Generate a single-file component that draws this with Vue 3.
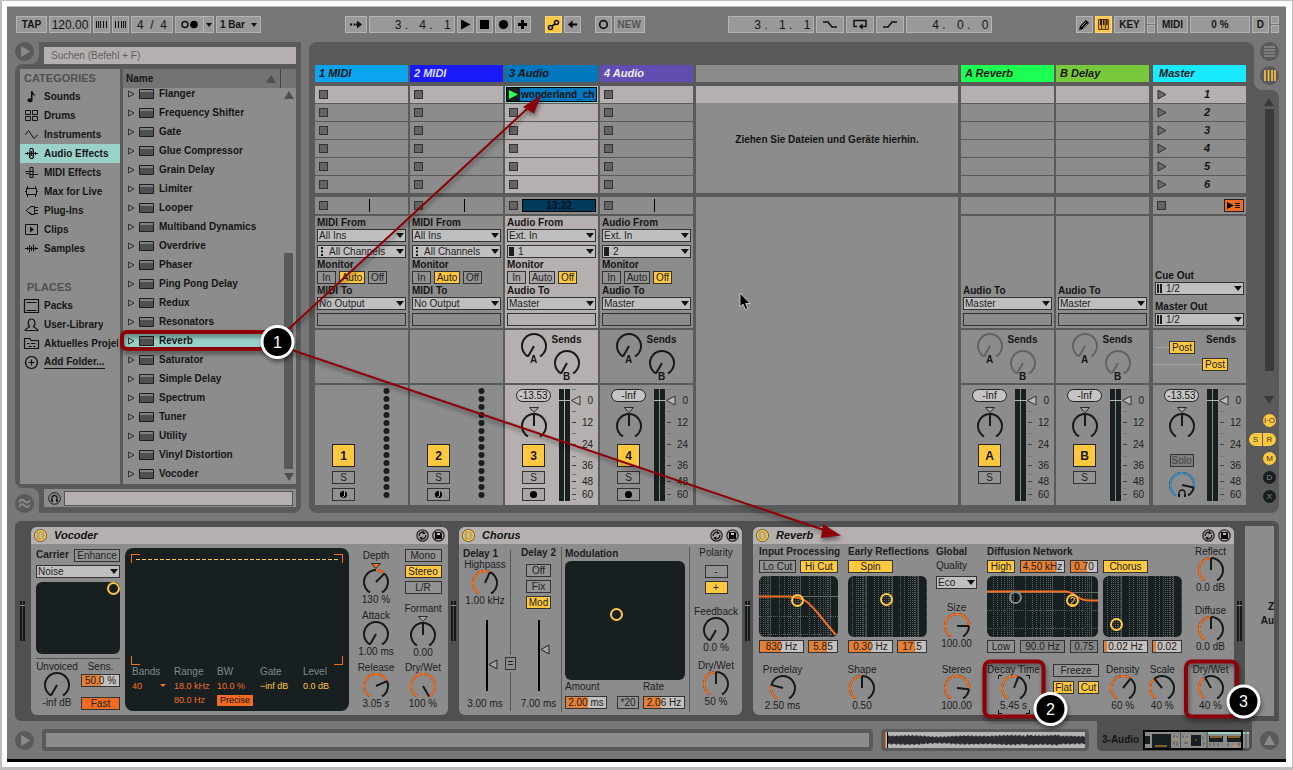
<script setup>
import { h } from 'vue'

const point = (deg, r, cx, cy) => {
  const a = (deg * Math.PI) / 180
  return [cx + r * Math.sin(a), cy - r * Math.cos(a)].map((n) => n.toFixed(2))
}
const arc = (from, to, cy) => {
  const [x1, y1] = point(from, 12, 14, cy)
  const [x2, y2] = point(to, 12, 14, cy)
  return `M${x1} ${y1}A12 12 0 ${to - from > 180 ? 1 : 0} 1 ${x2} ${y2}`
}

const Knob = (p) => {
  const v = p.v
  const centered = p.centered !== undefined
  const cy = centered ? 20 : 12
  const angle = 210 + v * 300
  const [px, py] = point(angle, 12, 14, cy)
  const tone = { orange: '#f4701f', blue: '#3f8bc4' }[p.tone]
  const dark = p.tone === 'dim' ? '#626262' : '#15191a'
  const parts = [h('path', { d: arc(210, 510, cy), stroke: dark })]
  if (tone && v > 0) parts.push(h('path', { d: arc(centered ? 360 : 210, angle, cy), stroke: tone }))
  parts.push(h('path', { d: `M14 ${cy}L${px} ${py}`, stroke: dark }))
  if (centered) {
    parts.push(h('path', { d: 'M9.5 1.5H18.5L14 6.5Z', stroke: '#2a2a2a', 'stroke-width': 1, fill: tone || '#a5a5a5' }))
  }
  return h('svg', {
    width: 28, height: cy + 12, viewBox: `0 0 28 ${cy + 12}`, overflow: 'visible', fill: 'none', 'stroke-width': 2, 'aria-hidden': 'true'
  }, parts)
}

const scale = [[11, '0'], [33, '12'], [55, '24'], [76, '36'], [92, '48'], [105, '60']]
const Meter = () => h('svg', { width: 34, height: 112, viewBox: '0 0 34 112', overflow: 'visible' }, [
  h('path', { d: 'M0 0h5v112h-5zM6 0h5v112h-5z', fill: '#171f21' }),
  h('path', { d: 'M0 11.5H12', stroke: '#b5b5b5' }),
  h('path', { d: 'M12.5 11.5L21 7V16Z', fill: '#b9b7b7', stroke: '#333' }),
  h('path', { d: 'M13 .5h4M13 22.5h4M13 44.5h4M13 67.5h4M13 85.5h4M13 99.5h4M13 110.5h4', stroke: '#777' }),
  h('path', { d: 'M13 33.5h4M13 55.5h4M13 76.5h4M13 92.5h4M13 105.5h4', stroke: '#444' }),
  ...scale.map(([y, t]) => h('text', { x: 34, y: y + 4, 'text-anchor': 'end', fill: '#222' }, t))
])

const Power = () => h('svg', { width: 13, height: 13, viewBox: '0 0 13 13', fill: 'none' }, [
  h('circle', { cx: 6.5, cy: 6.5, r: 5.2, fill: '#b2a98c', stroke: '#5a5137', 'stroke-width': 2.6 }),
  h('circle', { cx: 6.5, cy: 6.5, r: 4.8, stroke: '#ffc83f', 'stroke-width': 1.8 }),
  h('path', { d: 'M6.5 4V9', stroke: '#ffc83f', 'stroke-width': 1.4 })
])
const HeadIcons = () => h('svg', { width: 29, height: 13, viewBox: '0 0 29 13', fill: 'none' }, [
  h('circle', { cx: 6.5, cy: 6.5, r: 5.7, fill: '#a5a3a3', stroke: '#2b2b2b', 'stroke-width': 1.3 }),
  h('path', { d: 'M3.2 7.2A3.3 3.3 0 0 1 7.8 3.5M9.8 5.8A3.3 3.3 0 0 1 5.2 9.5', stroke: '#151515', 'stroke-width': 1.3 }),
  h('path', { d: 'M7 1.8L10 4.3L6.5 5.4ZM6 11.2L3 8.7L6.5 7.6Z', fill: '#151515' }),
  h('circle', { cx: 22.5, cy: 6.5, r: 5.7, fill: '#a5a3a3', stroke: '#2b2b2b', 'stroke-width': 1.3 }),
  h('path', { d: 'M19 3H25L26 4V10H19Z', fill: '#080808' }),
  h('path', { d: 'M21 4h3v2h-3z', fill: '#c5c3c3' })
])
const SideMeter = () => h('svg', { width: 5, height: 40, viewBox: '0 0 5 40' }, [
  h('path', { d: 'M0 0h2v40h-2zM3 0h2v40h-2z', fill: '#11191b' }),
  h('path', { d: 'M0 4.5h5', stroke: '#8c8c8c' })
])

const gridLines = (start, decade, width) => {
  const solid = []
  const dotted = []
  for (let o = -1; o < 4; o++) {
    for (let k = 1; k < 10; k++) {
      const x = start + decade * (o + Math.log10(k))
      if (x > 0 && x < width) (k === 1 ? solid : dotted).push(Math.round(x) + 0.5)
    }
  }
  return { solid, dotted }
}
const GridPad = (p) => {
  const g = gridLines(p.start, p.decade, p.w)
  const line = (d, s, dash) => h('path', { d, stroke: s, 'stroke-dasharray': dash })
  const parts = [
    line(g.dotted.map((x) => `M${x} 0V61`).join(''), '#5b6163', '1 1'),
    line(g.solid.map((x) => `M${x} 0V61`).join(''), '#4b5052')
  ]
  ;(p.rows || []).forEach((y, i) => parts.push(line(`M0 ${y}.5H${p.w}`, i ? '#5b6163' : '#666b6c', i ? '1 1' : undefined)))
  if (p.curve) parts.push(h('path', { d: p.curve, stroke: '#f4701f', 'stroke-width': 2 }))
  p.dots.forEach(([x, y, c, t]) => {
    parts.push(h('circle', { cx: x, cy: y, r: 5.5, stroke: c, 'stroke-width': 2 }))
    if (t) parts.push(h('text', { x, y: y + 4, 'text-anchor': 'middle', fill: t === '1' ? '#050505' : c, 'font-size': 10 }, t))
  })
  return h('svg', { width: p.w, height: 61, viewBox: `0 0 ${p.w} 61`, fill: 'none' }, parts)
}

const categories = ['Sounds', 'Drums', 'Instruments', 'Audio Effects', 'MIDI Effects', 'Max for Live', 'Plug-Ins', 'Clips', 'Samples']
const places = ['Packs', 'User-Library', 'Aktuelles Projekt', 'Add Folder...']
const iconPaths = {
  Sounds: { f: 'M6 1h1.5c0 2 3 3 2.5 6c-.5-2-1.5-2-2.5-2.5V10a2.5 2 0 1 1-1.5-1.6Z' },
  Drums: { s: 'M.5 1.5h5v4h-5zM7.5 1.5h5v4h-5zM.5 7.5h5v4h-5zM7.5 7.5h5v4h-5z' },
  Instruments: { s: 'M0 7L3.5 2.5L9 10.5L13 6.5' },
  'Audio Effects': { s: 'M0 6.5H13M2.5 5v3M4.5 4.5V11M6.5 4V9M8.5 3V11M10.5 5V8M5 1.5H8V11.5H5Z' },
  'MIDI Effects': { s: 'M0 5.5H9M4 8.5H13M1 7.5H4M5 1.5H8V11.5H5Z' },
  'Max for Live': { s: 'M1.5 3.5H11.5V9.5H1.5ZM2.5 1V3.5M10.5 1V3.5M2.5 9.5V12M10.5 9.5V12M0 6.5H1.5M11.5 6.5H13' },
  'Plug-Ins': { s: 'M1 6.5L6 2.5H9.5V10.5H6ZM10 3.5H13M10 6.5H13M10 9.5H13M4 8L7 10.5' },
  Clips: { s: 'M.5 1.5H12.5V11.5H.5Z', f: 'M5 3.5L9 6.5L5 9.5Z' },
  Samples: { s: 'M0 6.5H13M2.5 5V8M4.5 3V10.5M6.5 4.5V9M8.5 2.5V9.5M10.5 5V8' },
  Packs: { s: 'M-.5 .5H13.5V13.5H-.5ZM1.5 3.5H11.5M1.5 11.5H11.5' },
  'User-Library': { s: 'M0 12.5H13C13 10 8.5 10 8.5 8.5C11 6 10 1 6.5 1C3 1 2 6 4.5 8.5C4.5 10 0 10 0 12.5Z' },
  'Aktuelles Projekt': { s: 'M-.5 11.5V1.5H5L6 3.5H13.5V11.5ZM2 6.5H4.5M6 6.5H10.5M4 9.5H6.5M8 9.5H10.5' },
  'Add Folder...': { s: 'M6.5 .5A6 6 0 1 1 6.49 .5ZM3.5 6.5H9.5M6.5 3.5V9.5' }
}
const effects = ['Flanger', 'Frequency Shifter', 'Gate', 'Glue Compressor', 'Grain Delay', 'Limiter', 'Looper', 'Multiband Dynamics', 'Overdrive', 'Phaser', 'Ping Pong Delay', 'Redux', 'Resonators', 'Reverb', 'Saturator', 'Simple Delay', 'Spectrum', 'Tuner', 'Utility', 'Vinyl Distortion', 'Vocoder']

const tracks = [
  { name: '1 MIDI', tone: 'sky', kind: 'MIDI', input: 'All Ins', channel: 'All Channels', monitor: 'Auto', out: 'No Output' },
  { name: '2 MIDI', tone: 'navy', kind: 'MIDI', input: 'All Ins', channel: 'All Channels', monitor: 'Auto', out: 'No Output' },
  { name: '3 Audio', tone: 'azure', kind: 'Audio', input: 'Ext. In', channel: '1', monitor: 'Off', out: 'Master', level: '-13.53', clip: 'wonderland_ch_', active: true },
  { name: '4 Audio', tone: 'violet', kind: 'Audio', input: 'Ext. In', channel: '2', monitor: 'Off', out: 'Master', level: '-Inf' }
]
const returns = [
  { name: 'A Reverb', tone: 'green', letter: 'A' },
  { name: 'B Delay', tone: 'lime', letter: 'B' }
]
const ledRows = Array.from({ length: 14 }, (_, i) => 3 + i * 8)

const fill = (pct) => ({ background: `linear-gradient(to right, #e28038 ${pct}%, #c2c0c0 ${pct}%)` })

const wave = (() => {
  let top = ''
  let bottom = ''
  for (let x = 0; x <= 197; x++) {
    const env = 4 + 0.8 * Math.sin(x / 11) * Math.sin(x / 29) + (x > 138 && x < 172 ? 1 : 0)
    const a = env + 1.2 * Math.sin(x * 2.3) * Math.cos(x * 0.71)
    const b = env + 1.2 * Math.cos(x * 1.9) * Math.sin(x * 0.53)
    top += `L${x + 3} ${(8 - a).toFixed(1)}`
    bottom = `L${x + 3} ${(8 + b).toFixed(1)}` + bottom
  }
  return `M3 8${top}${bottom}Z`
})()
</script>

<template>
  <div class="page">
    <div class="app">
      <header class="toolbar">
        <div class="group">
          <button class="tb w31">TAP</button>
          <input class="tb tempo" value="120.00" aria-label="Tempo">
          <button class="tb w17" aria-label="Nudge down"><svg width="13" height="9"><path d="M1.5 1V8M3.5 1V8M5.5 1V8M8.5 1V8M11.5 1V8" stroke="#111" /></svg></button>
          <button class="tb w17" aria-label="Nudge up"><svg width="13" height="9"><path d="M1.5 1V8M4.5 1V8M7.5 1V8M9.5 1V8M11.5 1V8" stroke="#111" /></svg></button>
          <div class="tb w42 digits"><span>4</span><span>/</span><span>4</span></div>
          <div class="pair">
            <button class="tb w30" aria-label="Metronome"><svg width="18" height="9"><circle cx="4" cy="4.5" r="3" fill="none" stroke="#111" stroke-width="1.5" /><circle cx="13" cy="4.5" r="3.8" fill="#000" /></svg></button>
            <button class="tb w11" aria-label="Metronome settings"><i class="down"></i></button>
          </div>
          <button class="tb w45 split"><span>1 Bar</span><i class="down"></i></button>
        </div>
        <div class="group">
          <button class="tb w22" aria-label="Follow"><svg width="14" height="9"><path d="M1 3.5h2v2h-2zM4.5 3.5h2v2h-2zM7 3.5h2v2h-2zM8 .5L13 4.5L8 8.5Z" fill="#111" /></svg></button>
          <div class="tb w86 digits wide"><span>3 .</span><span>4 .</span><span>1</span></div>
          <button class="tb w17" aria-label="Play"><svg width="11" height="11"><path d="M1 .5L10.5 5.5L1 10.5Z" /></svg></button>
          <button class="tb w17" aria-label="Stop"><svg width="9" height="9"><path d="M0 0h9v9h-9z" /></svg></button>
          <button class="tb w17" aria-label="Record"><svg width="11" height="11"><circle cx="5.5" cy="5.5" r="4.6" /></svg></button>
          <button class="tb w17" aria-label="Overdub"><svg width="9" height="9"><path d="M3 0h3v3h3v3h-3v3h-3v-3h-3v-3h3z" /></svg></button>
          <span class="spacer"></span>
          <button class="tb w17 on" aria-label="Automation arm"><svg width="13" height="12" fill="none" stroke="#111" stroke-width="1.6"><circle cx="3.5" cy="8.5" r="2" /><circle cx="9.5" cy="3.5" r="2" /><path d="M5 7L8 5" /></svg></button>
          <button class="tb w17" aria-label="Re-enable automation"><svg width="9" height="9"><path d="M0 4.5L4.5 .5V3.5H9V5.5H4.5V8.5Z" /></svg></button>
          <span class="spacer"></span>
          <button class="tb w17" aria-label="Session record"><svg width="11" height="11"><circle cx="5.5" cy="5.5" r="3.8" fill="none" stroke="#111" stroke-width="1.7" /></svg></button>
          <button class="tb w31 off">NEW</button>
        </div>
        <div class="group">
          <div class="tb w86 digits wide"><span>3 .</span><span>1 .</span><span>1</span></div>
          <button class="tb w28" aria-label="Punch in"><svg width="16" height="9"><path d="M1 2H6L10 7H15" fill="none" stroke="#111" stroke-width="1.5" /></svg></button>
          <button class="tb w28" aria-label="Loop"><svg width="16" height="11"><path d="M5 7.5H2V1.5H14V7.5H9" fill="none" stroke="#111" stroke-width="1.5" /><path d="M7 7.5L10.5 4.5V10.5Z" /></svg></button>
          <button class="tb w28" aria-label="Punch out"><svg width="16" height="9"><path d="M1 7H6L10 2H15" fill="none" stroke="#111" stroke-width="1.5" /></svg></button>
          <div class="tb w86 digits wide"><span>4 .</span><span>0 .</span><span>0</span></div>
        </div>
        <div class="group">
          <button class="tb w17" aria-label="Draw mode"><svg width="12" height="12"><path d="M1 11L2 7L8 1L11 4L5 10Z" /><path d="M3.5 7.5L8 3M5 9L9.5 4.5" stroke="#aaa" stroke-width=".8" /></svg></button>
          <button class="tb w17 on" aria-label="Computer keyboard"><svg width="11" height="11"><path d="M.5 .5H10.5V10.5H.5Z" fill="#e0a52c" stroke="#5b3b00" /><path d="M3.5 6V10.5M7.5 6V10.5" stroke="#5b3b00" /><path d="M2 0h2v6h-2zM5 0h1.5v6h-1.5zM7.5 0h2v6h-2z" fill="#2a1a00" /></svg></button>
          <button class="tb w31">KEY</button>
          <div class="leds"><i></i><i></i></div>
          <button class="tb w31">MIDI</button>
          <div class="tb w60">0 %</div>
          <button class="tb w17">D</button>
          <div class="leds"><i></i><i></i></div>
        </div>
      </header>

      <main class="main">
        <section class="browser">
          <div class="search-row">
            <div class="corner low"><button class="round" aria-label="Toggle browser"><svg width="19" height="19"><path d="M6 4L15.5 9.5L6 15Z" fill="#8a8a8a" /></svg></button></div>
            <div class="search"><input type="search" placeholder="Suchen (Befehl + F)" aria-label="Suchen"></div>
          </div>
          <div class="browse">
            <nav class="cats">
              <h2>CATEGORIES</h2>
              <button v-for="c in categories" :key="c" :class="{ picked: c === 'Audio Effects' }">
                <svg width="13" height="13" fill="none"><path v-if="iconPaths[c].s" :d="iconPaths[c].s" stroke="#111" /><path v-if="iconPaths[c].f" :d="iconPaths[c].f" fill="#111" /></svg><span>{{ c }}</span>
              </button>
              <h2 class="places">PLACES</h2>
              <button v-for="c in places" :key="c">
                <svg width="13" height="14" fill="none" overflow="visible"><path :d="iconPaths[c].s" stroke="#111" stroke-width="1.2" /></svg><span class="place" :class="{ line: c.startsWith('Add') }">{{ c }}</span>
              </button>
            </nav>
            <div class="list">
              <div class="list-head"><span>Name</span><i class="up"></i><b></b></div>
              <div class="list-body">
                <ul>
                  <li v-for="e in effects" :key="e">
                    <button :class="{ picked: e === 'Reverb' }">
                      <svg width="26" height="12" fill="none"><path d="M.5 3L6 6L.5 9Z" stroke="#333" /><path d="M11.5 1.5H25.5V10.5H11.5Z" fill="#505050" stroke="#1d1d1d" /><path d="M12 2h13v2h-13z" fill="#808080" /></svg>{{ e }}
                    </button>
                  </li>
                </ul>
                <div class="bar"><i class="up"></i><span></span><i class="dn"></i></div>
              </div>
            </div>
          </div>
          <div class="preview-row">
            <div class="corner high"><button class="round" aria-label="Groove pool"><svg width="19" height="19" fill="none" stroke="#8a8a8a" stroke-width="2"><path d="M4 8.5C6 5 8 5 9.5 7S13 9 15 6.5M4 13C6 9.5 8 9.5 9.5 11.5S13 13.5 15 11" /></svg></button></div>
            <div class="preview-wrap">
              <div class="preview">
                <svg width="13" height="13" fill="none" stroke="#1c1c1c"><circle cx="6.5" cy="6.5" r="5.8" /><path d="M4 9V6A2.5 2.5 0 0 1 9 6V9" stroke-width="1.3" /><path d="M4 7v3M9 7v3" stroke-width="2" /></svg>
                <div class="preview-box"></div>
              </div>
            </div>
          </div>
        </section>

        <section class="session">
          <div class="mixer">
            <div class="columns">
              <article v-for="(t, i) in tracks" :key="t.name" class="track" :class="{ active: t.active }">
                <h3 :class="t.tone">{{ t.name }}</h3>
                <div class="slots">
                  <div v-for="n in 6" :key="n" class="slot" :class="{ hot: n === 1, playing: n === 1 && t.clip }">
                    <button v-if="n === 1 && t.clip" class="clip"><svg width="13" height="13"><path d="M0 0h13v13h-13z" fill="#171f21" /><path d="M2 2L11 6.5L2 11Z" fill="#2dff55" /></svg><span>{{ t.clip }}</span></button>
                    <button v-else class="stop" aria-label="Clip stop"></button>
                  </div>
                </div>
                <div class="status">
                  <button class="stop" aria-label="Track stop"></button>
                  <span v-if="t.clip" class="time">13:22</span>
                  <i v-else class="tick"></i>
                </div>
                <div class="io">
                  <label :for="'in' + i">{{ t.kind }} From</label>
                  <span class="sel"><select :id="'in' + i"><option>{{ t.input }}</option></select></span>
                  <span class="sel chan gap"><svg v-if="t.kind === 'MIDI'" width="6" height="9"><path d="M2 0h2v2h-2zM2 3.5h2v2h-2zM2 7h2v2h-2z" fill="#111" /></svg><svg v-else width="6" height="9"><path d="M0 0h5v9h-5z" fill="#171f21" /></svg><select :class="{ wide: t.kind === 'MIDI' }" :aria-label="t.name + ' channel'"><option>{{ t.channel }}</option></select></span>
                  <span class="lab">Monitor</span>
                  <div class="monitor"><button v-for="m in ['In', 'Auto', 'Off']" :key="m" class="btn" :class="{ on: m === t.monitor, mid: m === 'Auto' }">{{ m }}</button></div>
                  <label :for="'out' + i">{{ t.kind }} To</label>
                  <span class="sel"><select :id="'out' + i"><option>{{ t.out }}</option></select></span>
                  <div class="blank gap"></div>
                </div>
                <div class="sends">
                  <template v-if="t.kind === 'Audio'">
                    <div class="send"><Knob :v="0" tone="plain" /><span>A</span></div>
                    <div class="send second"><b>Sends</b><Knob :v="0" tone="plain" /><span>B</span></div>
                  </template>
                </div>
                <div class="strip">
                  <div class="controls">
                    <div class="pan"><template v-if="t.level"><span class="pill">{{ t.level }}</span><Knob :v="0.5" centered tone="plain" /></template></div>
                    <button class="num-btn">{{ i + 1 }}</button>
                    <button class="btn small">S</button>
                    <button class="btn small" aria-label="Arm"><svg width="9" height="9"><circle cx="4.5" cy="4.5" r="3.6" /><path v-if="t.kind === 'MIDI'" d="M5.5 1V6L3 7.5" fill="none" stroke="#aaa" /></svg></button>
                  </div>
                  <Meter v-if="t.level" class="meter" />
                  <svg v-else class="leds14" width="7" height="112"><circle v-for="y in ledRows" :key="y" cx="3.5" :cy="y" r="3" fill="#171f21" /></svg>
                </div>
              </article>
            </div>

            <div class="drop">
              <div class="drop-title"></div>
              <div class="drop-slots"><div class="hot"></div><p>Ziehen Sie Dateien und Geräte hierhin.</p></div>
              <div class="drop-rest"></div>
            </div>

            <div class="columns">
              <article v-for="r in returns" :key="r.name" class="track">
                <h3 :class="r.tone">{{ r.name }}</h3>
                <div class="slots"><div v-for="n in 6" :key="n" class="slot" :class="{ hot: n === 1 }"></div></div>
                <div class="status"></div>
                <div class="io">
                  <label class="push" :for="'ret' + r.letter">Audio To</label>
                  <span class="sel"><select :id="'ret' + r.letter"><option>Master</option></select></span>
                  <div class="blank gap"></div>
                </div>
                <div class="sends">
                  <div class="send"><Knob :v="0" tone="dim" /><span>A</span></div>
                  <div class="send second"><b>Sends</b><Knob :v="0" tone="dim" /><span>B</span></div>
                </div>
                <div class="strip">
                  <div class="controls">
                    <div class="pan"><span class="pill">-Inf</span><Knob :v="0.5" centered tone="plain" /></div>
                    <button class="num-btn">{{ r.letter }}</button>
                    <button class="btn small">S</button>
                  </div>
                  <Meter class="meter" />
                </div>
              </article>
            </div>

            <article class="track master">
              <h3 class="cyan">Master</h3>
              <div class="slots"><div v-for="n in 6" :key="n" class="slot scene" :class="{ hot: n === 1 }"><svg width="10" height="11"><path d="M1 1L9 5.5L1 10Z" fill="#6a6a6a" stroke="#333" /></svg><span>{{ n }}</span></div></div>
              <div class="status"><button class="stop" aria-label="Stop all clips"></button><button class="arrange" aria-label="Back to arrangement"><svg width="14" height="9"><path d="M0 1L7 4.5L0 8Z" /><path d="M8 2.5h5M8 4.5h5M8 6.5h5" stroke="#111" /></svg></button></div>
              <div class="io">
                <label class="push" for="cue">Cue Out</label>
                <span class="sel chan"><svg width="6" height="9"><path d="M0 0h2v9h-2zM3 0h2v9h-2z" fill="#171f21" /></svg><select id="cue"><option>1/2</option></select></span>
                <label class="later" for="mst">Master Out</label>
                <span class="sel chan"><svg width="6" height="9"><path d="M0 0h2v9h-2zM3 0h2v9h-2z" fill="#171f21" /></svg><select id="mst"><option>1/2</option></select></span>
              </div>
              <div class="sends posts">
                <div class="post"><i></i><button class="btn on">Post</button></div>
                <div class="post two"><b>Sends</b><div><i></i><button class="btn on">Post</button></div></div>
              </div>
              <div class="strip">
                <div class="controls">
                  <div class="pan"><span class="pill">-13.53</span><Knob :v="0.5" centered tone="plain" /></div>
                  <button class="btn solo">Solo</button>
                  <div class="cue"><Knob :v="0.84" tone="blue" /><svg width="10" height="9" fill="none" stroke="#111"><path d="M2 8V4A3 3 0 0 1 8 4V8" stroke-width="1.3" /><path d="M2 5v3M8 5v3" stroke-width="2" /></svg></div>
                </div>
                <Meter class="meter" />
              </div>
            </article>
          </div>
          <aside class="side">
            <div class="views-wrap"><div class="views">
              <button class="round" aria-label="Arrangement view"><svg width="19" height="19" stroke="#8a8a8a" stroke-width="1.5"><path d="M4 5h11M4 8h11M4 11h11M4 14h11" /></svg></button>
              <button class="round" aria-label="Session view"><svg width="19" height="19" stroke="#ffc83f" stroke-width="2"><path d="M5 4v11M8.5 4v11M12 4v11M15 4v11" stroke-width="1.6" /></svg></button>
            </div></div>
            <div class="rail">
              <i class="up"></i><span class="track-bar"></span><i class="dn"></i>
              <button class="mini on">I·O</button>
              <div class="mini-row"><button class="mini on left">S</button><button class="mini on right">R</button></div>
              <button class="mini on">M</button>
              <button class="mini">D</button>
              <button class="mini">X</button>
            </div>
          </aside>
        </section>
      </main>

      <section class="detail">
        <div class="gutter first"><SideMeter /></div>
        <article class="device vocoder">
          <header><Power /><h4>Vocoder</h4><HeadIcons /></header>
          <div class="body">
            <div class="v-carrier">
              <div class="row"><label for="carrier" class="strong">Carrier</label><button class="btn enhance">Enhance</button></div>
              <span class="sel"><select id="carrier"><option>Noise</option></select></span>
              <svg class="pad" width="84" height="72"><circle cx="77.5" cy="6.5" r="5.5" fill="none" stroke="#ffc83f" stroke-width="2" /></svg>
              <hr>
              <div class="row under">
                <label class="knob"><span>Unvoiced</span><Knob :v="0" tone="plain" /><span>-inf dB</span><input type="range" value="0"></label>
                <div class="sens"><label for="sens">Sens.</label><input id="sens" class="num" value="50.0 %" :style="fill(50)"><button class="btn fast">Fast</button></div>
              </div>
            </div>
            <div class="display">
              <svg width="100%" height="118" viewBox="0 0 224 118" fill="none" shape-rendering="crispEdges"><path d="M6.5 15V6.5H15M209 6.5H217.5V15M6.5 108V116.5H15M209 116.5H217.5V108" stroke="#f4701f" /><path d="M11 11.5H213" stroke="#ffc83f" stroke-dasharray="4 2" /></svg>
              <div class="params">
                <span>Bands</span><span>Range</span><span>BW</span><span>Gate</span><span>Level</span>
                <b class="bands">40 <i></i></b><b>18.0 kHz</b><b>10.0 %</b><b class="y">−inf dB</b><b class="y">0.0 dB</b>
                <b></b><b>80.0 Hz</b><button>Precise</button>
              </div>
            </div>
            <div class="v-col c3">
              <label class="knob"><span>Depth</span><Knob :v="0.65" centered tone="orange" /><span>130 %</span><input type="range" value="65"></label>
              <label class="knob"><span>Attack</span><Knob :v="0" tone="plain" /><span>1.00 ms</span><input type="range" value="0"></label>
              <label class="knob"><span>Release</span><Knob :v="0.72" tone="orange" /><span>3.05 s</span><input type="range" value="72"></label>
            </div>
            <div class="v-col c4">
              <button class="btn">Mono</button><button class="btn on">Stereo</button><button class="btn">L/R</button>
              <label class="knob"><span>Formant</span><Knob :v="0.5" centered tone="plain" /><span>0.00</span><input type="range" value="50"></label>
              <label class="knob"><span>Dry/Wet</span><Knob :v="1" tone="orange" /><span>100 %</span><input type="range" value="100"></label>
            </div>
          </div>
        </article>
        <div class="gutter"><SideMeter /></div>
        <article class="device chorus">
          <header><Power /><h4>Chorus</h4><HeadIcons /></header>
          <div class="body">
            <div class="d1">
              <b>Delay 1</b>
              <label class="knob"><span>Highpass</span><Knob :v="0.58" tone="orange" /><span>1.00 kHz</span><input type="range" value="58"></label>
              <svg width="14" height="72"><path d="M3 0V71" stroke="#000" stroke-width="2" /><path d="M5 44.5L13 40V49Z" fill="#a5a3a3" stroke="#222" /></svg>
              <span>3.00 ms</span>
            </div>
            <div class="link"><i></i><button>=</button><i class="rest"></i></div>
            <div class="d2">
              <b>Delay 2</b>
              <button class="btn">Off</button><button class="btn">Fix</button><button class="btn on">Mod</button>
              <svg width="14" height="72"><path d="M3 0V71" stroke="#000" stroke-width="2" /><path d="M5 29.5L13 25V34Z" fill="#a5a3a3" stroke="#222" /></svg>
              <span>7.00 ms</span>
            </div>
            <div class="mod">
              <b>Modulation</b>
              <svg class="pad" width="120" height="119"><circle cx="51.5" cy="53.5" r="5.5" fill="none" stroke="#ffc83f" stroke-width="2" /></svg>
              <div class="mod-labels"><label for="amt">Amount</label><label for="rate">Rate</label></div>
              <div class="mod-vals"><input id="amt" class="num" value="2.00 ms" :style="fill(56)"><button class="btn">*20</button><input id="rate" class="num" value="2.06 Hz" :style="fill(42)"></div>
            </div>
            <div class="pol">
              <span>Polarity</span>
              <button class="btn">-</button><button class="btn on">+</button>
              <label class="knob"><span>Feedback</span><Knob :v="0" tone="plain" /><span>0.0 %</span><input type="range" value="0"></label>
              <label class="knob"><span>Dry/Wet</span><Knob :v="0.5" tone="orange" /><span>50 %</span><input type="range" value="50"></label>
            </div>
          </div>
        </article>
        <div class="gutter"><SideMeter /></div>
        <article class="device reverb">
          <header><Power /><h4>Reverb</h4><HeadIcons /></header>
          <div class="body">
            <div class="r-col">
              <div class="top">
                <b>Input Processing</b>
                <div class="row gap4"><button class="btn w37">Lo Cut</button><button class="btn on grow">Hi Cut</button></div>
                <GridPad class="pad" :w="79" :start="10.5" :decade="30" :rows="[20, 40, 58]" curve="M0 20.5H30C50 21 52 30 77 59" :dots="[[38.5, 24.5, '#ffc83f']]" />
                <div class="row gap4"><input class="num w45" value="830 Hz" aria-label="Filter frequency" :style="fill(50)"><input class="num grow" value="5.85" aria-label="Filter width" :style="fill(64)"></div>
              </div>
              <label class="knob w47"><span>Predelay</span><Knob :v="0.25" tone="orange" /><span>2.50 ms</span><input type="range" value="25"></label>
            </div>
            <div class="r-col">
              <div class="top">
                <b>Early Reflections</b>
                <button class="btn on w45">Spin</button>
                <GridPad class="pad" :w="79" :start="18" :decade="26" :dots="[[38.5, 23.5, '#ffc83f']]" />
                <div class="row gap4"><input class="num w45" value="0.30 Hz" aria-label="Spin rate" :style="fill(50)"><input class="num grow" value="17.5" aria-label="Spin amount" :style="fill(62)"></div>
              </div>
              <label class="knob w28"><span>Shape</span><Knob :v="0.5" tone="orange" /><span>0.50</span><input type="range" value="50"></label>
            </div>
            <div class="r-col">
              <div class="top">
                <b>Global</b>
                <label for="quality" class="quality">Quality</label>
                <span class="sel"><select id="quality"><option>Eco</option></select></span>
                <label class="knob size"><span>Size</span><Knob :v="0.8" tone="orange" /><span>100.00</span><input type="range" value="80"></label>
              </div>
              <label class="knob"><span>Stereo</span><Knob :v="0.82" tone="orange" /><span>100.00</span><input type="range" value="82"></label>
            </div>
            <div class="r-col">
              <div class="top">
                <b>Diffusion Network</b>
                <div class="row gap5"><button class="btn on w28">High</button><input class="num grow" value="4.50 kHz" aria-label="High frequency" :style="fill(82)"><input class="num w28" value="0.70" aria-label="High shelf" :style="fill(62)"></div>
                <GridPad class="pad" :w="111" :start="26" :decade="39" :rows="[16, 34, 52]" curve="M0 15.5H78C90 16 88 24.5 103 24.5H111" :dots="[[28.5, 21.5, '#7d8b90', '1'], [85.5, 24.5, '#ffc83f', '2']]" />
                <div class="row gap5"><button class="btn w28">Low</button><input class="num plain grow" value="90.0 Hz" aria-label="Low frequency"><input class="num plain w28" value="0.75" aria-label="Low shelf"></div>
              </div>
              <div class="row decay">
                <label class="knob focus"><span>Decay Time</span><Knob :v="0.57" tone="orange" /><span>5.45 s</span><input type="range" value="57"><svg class="brackets" width="32" height="39" fill="none" stroke="#000"><path d="M.5 4V.5H4M28 .5H31.5V4M.5 35V38.5H4M28 38.5H31.5V35" /></svg></label>
                <div class="freeze"><button class="btn">Freeze</button><div class="row"><button class="btn on">Flat</button><button class="btn on">Cut</button></div></div>
              </div>
            </div>
            <div class="r-col">
              <div class="top">
                <b></b>
                <button class="btn on w45">Chorus</button>
                <GridPad class="pad" :w="79" :start="18" :decade="26" :dots="[[13.5, 48.5, '#ffc83f']]" />
                <div class="row gap4"><input class="num w45" value="0.02 Hz" aria-label="Chorus rate" :style="fill(8)"><input class="num grow" value="0.02" aria-label="Chorus amount" :style="fill(10)"></div>
              </div>
              <div class="row">
                <label class="knob w40"><span>Density</span><Knob :v="0.63" tone="orange" /><span>60 %</span><input type="range" value="60"></label>
                <label class="knob w40"><span>Scale</span><Knob :v="0.37" tone="orange" /><span>40 %</span><input type="range" value="40"></label>
              </div>
            </div>
            <div class="r-col">
              <label class="knob"><span>Reflect</span><Knob :v="0.5" tone="orange" /><span>0.0 dB</span><input type="range" value="50"></label>
              <label class="knob"><span>Diffuse</span><Knob :v="0.5" tone="orange" /><span>0.0 dB</span><input type="range" value="50"></label>
              <label class="knob"><span>Dry/Wet</span><Knob :v="0.4" tone="orange" /><span>40 %</span><input type="range" value="40"></label>
            </div>
          </div>
        </article>
        <div class="gutter"><SideMeter /></div>
        <div class="device-drop"><p>Z<br>Au</p></div>
      </section>

      <footer class="footer">
        <button class="round" aria-label="Info view"><svg width="19" height="19"><path d="M6 4L15.5 9.5L6 15Z" fill="#8a8a8a" /></svg></button>
        <div class="info"></div>
        <div class="overview"><svg width="100%" height="16" viewBox="0 0 200 16" preserveAspectRatio="none"><path :d="wave" fill="#2b2d30" /><path d="M.5 0V16" stroke="#f4701f" /><path d="M2.5 0V16" stroke="#000" /></svg></div>
        <div class="tab">
          <span>3-Audio</span>
          <svg width="106" height="20" fill="none">
            <path d="M0 2h106v16h-106z" fill="#8c8c8c" /><path d="M65 2h41v2h-41z" fill="#9ad2c9" />
            <path d="M0 6h7v8h-7zM9 4h19v14h-19zM48 5h10v11h-10zM66 6h14v6h-14zM84 6h14v6h-14z" fill="#171f21" />
            <path d="M37.5 2v16M64 2v16M103 2v16" stroke="#505050" />
            <path d="M31 5v3M34 6v2M31 11v4M34 12v4M40 5v3M44 6v2M41 13h4M60 6v3M61 12v3M67 13v3M71 13v3M75 13v3M85 13v3M96 13v3" stroke="#555" />
            <path d="M12 16h12M31 9h3M44 9h2M52.5 10h1M67 7h12M85 7h12M90 16h5" stroke="#f0a030" />
            <path d="M1 1H99V19H1Z" stroke="#000" stroke-width="2" />
          </svg>
        </div>
        <button class="round" aria-label="Detail view"><svg width="19" height="19"><path d="M9.5 4L15 14H4Z" fill="#8a8a8a" /></svg></button>
      </footer>
    </div>

    <svg class="notes" width="1293" height="770" viewBox="0 0 1293 770" fill="none" aria-hidden="true">
      <g class="shade">
        <path d="M280 337L528 108M280 346L824 530" stroke="#8e0009" stroke-width="2" />
        <path d="M541 95L534 113.5L523 107ZM841 535.5L823 524L821 538Z" fill="#8e0009" />
        <rect x="122" y="332" width="164" height="17" rx="5" stroke="#8e0009" stroke-width="4" />
        <rect x="984.5" y="661.5" width="59" height="55" rx="6" stroke="#8e0009" stroke-width="4" />
        <rect x="1186" y="661.5" width="51" height="55" rx="6" stroke="#8e0009" stroke-width="4" />
      </g>
      <g class="shade" fill="#000" stroke="#fff" stroke-width="3">
        <circle cx="277.5" cy="342" r="15.5" /><circle cx="1050.5" cy="709" r="15.5" /><circle cx="1243.5" cy="701.5" r="15.5" />
      </g>
      <g fill="#fff" font-size="16" text-anchor="middle"><text x="277.5" y="348">1</text><text x="1050.5" y="715">2</text><text x="1243.5" y="707">3</text></g>
      <path d="M740 293V307L743 304L745.5 309.5L748 308.5L745.5 303.5H750Z" fill="#000" stroke="#ddd" stroke-width=".8" />
    </svg>
  </div>
</template>

<style>
html, body { margin: 0; background: #fff; }
</style>

<style scoped>
* { box-sizing: border-box; }
.page { position: relative; padding: 5px 6px 5px 5px; border: solid #bdbdbd; border-width: 1px 1px 3px 2px; font: 10px/12px "Liberation Sans", Arial, sans-serif; color: #151515; min-width: 1293px; overflow: hidden; }
button, input, select { font: inherit; color: inherit; margin: 0; padding: 0; border: 0; background: none; border-radius: 0; }
h2, h3, h4, p, ul { margin: 0; padding: 0; }
ul { list-style: none; }
svg { display: block; flex: none; }
.app { background: #777; border-top: 1px solid #bbb; border-bottom: 3px solid #000; white-space: nowrap; }
.notes { position: absolute; left: -2px; top: -1px; pointer-events: none; }
.shade { filter: drop-shadow(1px 3px 2px rgba(0, 0, 0, .45)); }

.toolbar { display: flex; justify-content: space-between; padding: 9px 7px 9px 9px; }
.group { display: flex; gap: 2px; }
.spacer { width: 10px; }
.tb { height: 17px; background: #999; border: 1px solid #b4b4b4; display: flex; align-items: center; justify-content: center; font-weight: bold; flex: none; }
.tb.on { background: #ffc83f; border-color: #ffd774; }
.tb.off { color: #555; }
.w11 { width: 11px; } .w17 { width: 17px; } .w22 { width: 22px; } .w28 { width: 28px; } .w30 { width: 29px; } .w31 { width: 31px; } .w37 { width: 37px; } .w40 { width: 40px; } .w42 { width: 42px; } .w45 { width: 45px; } .w47 { width: 47px; } .w60 { width: 60px; } .w86 { width: 86px; }
.tempo { width: 42px; font-size: 12px; font-weight: normal; text-align: center; }
.digits { font-size: 12px; font-weight: normal; justify-content: space-between; padding: 0 5px; }
.digits.wide { padding: 0 3px 0 25px; }
.pair { display: flex; }
.pair .tb + .tb { margin-left: -1px; }
.split { justify-content: space-between; padding: 0 3px; }
.down { border: solid transparent; border-width: 4px 3px 0; border-top-color: #111; }
.leds { display: flex; flex-direction: column; gap: 1px; width: 8px; }
.leds i { flex: 1; border: 1px solid #b4b4b4; background: #999; }

.main { display: flex; gap: 8px; padding: 0 7px 0 8px; }
.round { width: 19px; height: 19px; border-radius: 50%; background: #5a5a5a; flex: none; display: flex; }
.browser { width: 286px; display: flex; flex-direction: column; flex: none; }
.search-row, .preview-row { display: flex; background: #5a5a5a; }
.search-row { border-radius: 8px 8px 0 0; }
.preview-row { border-radius: 0 0 8px 8px; }
.corner { width: 24px; background: #777; flex: none; }
.corner.low { border-bottom-right-radius: 8px; }
.corner.high { border-top-right-radius: 8px; padding-top: 6px; }
.search { flex: 1; background: #5a5a5a; border-top-left-radius: 6px; padding: 5px 5px 0; height: 22px; }
.search input { width: 100%; height: 17px; background: #b5b0af; padding: 0 7px; display: block; appearance: none; }
.search input::placeholder { color: #5f5f5f; opacity: 1; }
.browse { flex: 1; display: flex; gap: 3px; background: #5a5a5a; padding: 5px 5px 4px; border-radius: 8px 0 0 8px; height: 0; }
.cats { width: 100px; background: #8c8c8c; overflow: hidden; }
.cats h2 { font-size: 11px; line-height: 18px; color: #505050; padding-left: 4px; }
.cats .places { margin-top: 20px; padding-left: 7px; }
.cats button { display: flex; align-items: center; gap: 6px; padding-left: 5px; width: 100%; height: 19px; font-weight: bold; }
.cats .place { max-width: 74px; overflow: hidden; }
.cats .line { border-bottom: 1px solid #111; }
.picked { background: #9ad2c9; }
.list { flex: 1; background: #8c8c8c; display: flex; flex-direction: column; overflow: hidden; }
.list-head { height: 19px; background: #737373; display: flex; align-items: center; padding-left: 3px; font-weight: bold; flex: none; }
.list-head .up { margin-left: auto; }
.list-head b { width: 1px; height: 19px; background: #444; margin: 0 15px 0 4px; }
.up, .dn { border: solid transparent; border-width: 0 5px 8px; border-bottom-color: #505050; }
.dn { border-width: 8px 5px 0; border-top-color: #505050; }
.list-body { display: flex; flex: 1; min-height: 0; }
.list-body ul { width: 160px; margin-top: -4px; }
.list-body li button { display: flex; align-items: center; gap: 5px; width: 100%; height: 19px; padding-left: 5px; font-weight: bold; }
.bar { width: 11px; display: flex; flex-direction: column; align-items: center; padding: 3px 0; }
.bar span { width: 9px; flex: 1; margin: 154px 0 4px; background: #58595a; }
.preview-wrap { flex: 1; padding: 1px 5px 6px; }
.preview { height: 18px; background: #8c8c8c; display: flex; align-items: center; gap: 3px; padding: 0 3px 0 4px; }
.preview-box { flex: 1; height: 15px; background: #b5b0af; border: 1px solid #555; }

.session { flex: 1; display: flex; min-width: 0; }
.mixer { flex: 1; min-width: 0; display: flex; background: #5a5a5a; border-radius: 8px 8px 0 8px; padding: 23px 8px 8px 6px; }
.columns { display: flex; gap: 2px; }
.track { width: 93px; display: flex; flex-direction: column; flex: none; }
.master { margin-left: 4px; }
.track h3 { font: italic bold 11px/17px "Liberation Sans", Arial, sans-serif; height: 17px; padding-left: 4px; }
.track h3.cyan { padding-left: 6px; }
.sky { background: #0aa5ee; } .navy { background: #1a1af8; color: #ddf; } .azure { background: #0078bd; } .violet { background: #634db1; color: #eee; }
.green { background: #1dff52; } .lime { background: #78c83c; } .cyan { background: #18ebff; }
.slots { display: flex; flex-direction: column; gap: 1px; margin: 4px 0; }
.slot, .status, .io, .sends, .strip { background: #8c8c8c; }
.active .slot, .active .io, .active .sends, .active .strip, .slot.hot { background: #b5b0af; }
.slot, .status { height: 17px; display: flex; align-items: center; padding-left: 4px; }
.stop { width: 9px; height: 9px; background: #646464; border: 1px solid #333; }
.active .slot.playing { padding: 1px; background: #9ad2c9; }
.clip { display: flex; align-items: center; width: 100%; height: 15px; border: 1px solid #000; background: #0078bd; font-weight: bold; overflow: hidden; gap: 1px; }
.scene svg { width: 10px; }
.scene span { font: italic bold 11px/17px "Liberation Sans", Arial, sans-serif; flex: 1; text-align: center; padding: 0 3px 0 4px; }
.time { margin: 0 2px 0 4px; flex: 1; height: 13px; background: #003a5c; border: 1px solid #000; color: #011018; font-weight: bold; line-height: 11px; text-align: center; }
.tick { width: 1px; height: 13px; background: #000; margin-left: 41px; }
.arrange { margin: 0 2px 0 auto; width: 20px; height: 13px; background: #f06a23; border: 1px solid #222; display: flex; align-items: center; justify-content: center; }
.io { height: 112px; margin-top: 2px; padding: 0 2px 2px; display: flex; flex-direction: column; }
.io label, .lab { height: 13px; line-height: 14px; font-weight: bold; }
.io .push { margin-top: auto; }
.io .later { margin-top: 5px; }
.gap { margin-top: 3px; }
.sel { height: 13px; border: 1px solid #333; background: #c0bfbf; position: relative; display: flex; align-items: center; flex: none; color: #222; }
.sel::after { content: ""; position: absolute; right: 1px; top: 3px; border: solid transparent; border-width: 5px 4px 0; border-top-color: #111; pointer-events: none; }
.sel select { appearance: none; flex: 1; width: 100%; height: 11px; line-height: 11px; padding-left: 1px; outline: 0; }
.chan svg { margin-left: 1px; }
.chan select { padding-left: 3px; }
.chan select.wide { padding-left: 4px; }
.monitor { display: flex; gap: 3px; }
.btn { height: 13px; border: 1px solid #333; line-height: 11px; text-align: center; display: flex; align-items: center; justify-content: center; background: #929292; flex: none; color: #222; }
.btn.grow { flex: 1; }
.active .btn { background: #aaa6a5; }
.btn.on, .active .btn.on { background: #ffc83f; }
.monitor .btn { width: 19px; }
.monitor .mid { width: 26px; }
.blank { height: 13px; border: 1px solid #333; }
.sends { height: 53px; margin: 2px 0; display: flex; padding-left: 14px; gap: 4px; }
.send { width: 29px; display: flex; flex-direction: column; align-items: center; padding-top: 4px; font-weight: bold; }
.send span { line-height: 10px; margin-top: -3px; }
.send b { line-height: 12px; margin-bottom: 5px; }
.posts { padding: 0 0 0 2px; gap: 0; }
.post { display: flex; align-items: flex-start; padding-top: 11px; }
.post i { width: 14px; height: 1px; background: #a5a5a5; margin-top: 6px; }
.post .btn { width: 26px; }
.post.two { display: block; padding-top: 4px; width: 0; }
.post.two b { display: block; margin-left: 11px; line-height: 12px; margin-bottom: 12px; }
.post.two div { display: flex; margin-left: -42px; }
.post.two i { width: 48px; flex: none; }
.post.two .btn { margin-left: 1px; }
.strip { height: 120px; display: flex; }
.controls { width: 54px; padding: 4px 0 0 3px; display: flex; flex-direction: column; align-items: center; gap: 4px; }
.pan { height: 51px; display: flex; flex-direction: column; align-items: center; gap: 4px; }
.pill { width: 35px; height: 13px; border: 1px solid #222; border-radius: 7px; background: #c5c3c3; text-align: center; line-height: 11px; }
.num-btn { width: 23px; height: 23px; flex: none; background: #ffc83f; border: 1px solid #222; font-size: 12px; font-weight: bold; }
.small { width: 23px; }
.solo { width: 24px; margin: 10px 0 2px; background: #7d7d7d; color: #444; }
.cue { display: flex; flex-direction: column; align-items: center; }
.cue svg + svg { margin-top: -8px; }
.meter { margin-top: 4px; font: 10px "Liberation Sans", Arial, sans-serif; }
.leds14 { margin: 3px 0 0 14px; }

.drop { flex: 1; margin: 0 3px; display: flex; flex-direction: column; gap: 4px; min-width: 0; }
.drop div { background: #8c8c8c; }
.drop-title { height: 17px; }
.drop-slots { height: 107px; }
.drop .hot { height: 17px; background: #b5b0af; }
.drop p { font-weight: bold; text-align: center; padding-top: 31px; }
.drop-rest { flex: 1; }
.side { width: 25px; display: flex; flex-direction: column; flex: none; }
.views-wrap { background: linear-gradient(to right, #5a5a5a 10px, #777 10px); }
.views { height: 48px; background: #777; border-bottom-left-radius: 8px; display: flex; flex-direction: column; gap: 5px; align-items: flex-end; }
.rail { flex: 1; background: #5a5a5a; border-radius: 0 8px 8px 0; display: flex; flex-direction: column; align-items: flex-end; padding: 8px 3px 10px 0; gap: 6px; }
.rail .up, .rail .dn { margin-right: 2px; border-bottom-color: #3a3b3c; border-top-color: #3a3b3c; }
.rail .dn { margin: 19px 2px 4px 0; }
.rail .up { margin-bottom: -3px; }
.track-bar { width: 9px; flex: 1; background: #3a3b3c; margin-right: 2px; }
.mini { width: 13px; height: 13px; border-radius: 7px; font-size: 8px; line-height: 13px; text-align: center; background: #171f21; color: #888; flex: none; }
.mini.on { background: #ffc83f; color: #333; }
.mini-row { display: flex; gap: 1px; }
.mini.left { border-radius: 7px 0 0 7px; }
.mini.right { border-radius: 0 7px 7px 0; }

.detail { margin: 8px 7px 0 8px; background: #505050; border-radius: 6px 6px 0 6px; padding: 6px 0; display: flex; align-items: stretch; }
.gutter { width: 11px; display: flex; align-items: flex-start; justify-content: center; padding-top: 74px; flex: none; }
.gutter.first { width: 16px; padding-right: 1px; }
.device { border-radius: 6px; background: #8c8c8c; overflow: hidden; flex: none; color: #1d1d1d; }
.device header { height: 17px; background: #b5b0af; display: flex; align-items: center; padding: 0 3px; color: #111; gap: 7px; }
.device header svg:last-child { margin-left: auto; }
.device h4 { font: italic bold 11px/17px "Liberation Sans", Arial, sans-serif; }
.device .body { height: 171px; display: flex; }
.device b, .strong { font-weight: bold; }
.vocoder { width: 417px; } .chorus { width: 283px; } .reverb { width: 481px; }
.row { display: flex; }
.gap4 { gap: 4px; } .gap5 { gap: 5px; }
.grow { flex: 1; min-width: 0; }
.knob { display: flex; flex-direction: column; align-items: center; position: relative; }
.knob span { line-height: 12px; }
.knob input { position: absolute; inset: 0; width: 100%; height: 100%; opacity: 0; }
.knob.w28, .knob.w40, .knob.w47 { align-self: flex-start; }
.num { height: 13px; border: 1px solid #333; text-align: center; color: #2a1a10; min-width: 0; }
.num.plain { background: #858585; color: #222; }
.pad { background: #171f21; border-radius: 6px; }
.v-carrier { margin: 5px 5px 0; width: 84px; display: flex; flex-direction: column; gap: 3px; }
.v-carrier .row { justify-content: space-between; }
.enhance { width: 46px; }
.v-carrier .pad { margin-top: 1px; }
.v-carrier hr { width: 100%; height: 1px; border: 0; background: #555; margin: 1px 0 -1px; }
.under .knob { width: 42px; }
.sens { width: 39px; display: flex; flex-direction: column; text-align: center; }
.sens .num { width: 39px; margin: 1px 0 10px; }
.device .fast { background: #f06a23; }
.display { flex: 1; margin: 4px 0 4px; background: #171f21; border-radius: 8px; }
.params { display: grid; grid-template: 12px 15px 14px / 42px 43px 43px 43px 1fr; padding-left: 7px; align-items: center; justify-items: start; color: #7d8b90; font-size: 9px; }
.params span { font-size: 10px; }
.params b { font-weight: normal; color: #f4701f; }
.params b.y { color: #ffc83f; }
.bands { display: flex; align-items: center; gap: 18px; }
.bands i { border: solid transparent; border-width: 3px 3px 0; border-top-color: #f4701f; }
.params button { background: #f06a23; color: #111; height: 11px; line-height: 11px; padding: 0 3px; }
.v-col { display: flex; flex-direction: column; }
.c3 { width: 54px; padding-top: 6px; gap: 4px; }
.c4 { width: 40px; padding-top: 5px; gap: 3px; margin-right: 5px; }
.c4 .btn { width: 37px; align-self: center; }
.c4 .btn + .knob { margin-top: 6px; }
.chorus b { line-height: 12px; }
.d1, .d2 { display: flex; flex-direction: column; align-items: center; }
.d1 { width: 48px; padding: 4px 0 5px; margin-left: 2px; }
.d1 b { align-self: flex-start; margin: 0 0 -1px 2px; }
.d1 svg + span, .d2 svg + span { margin-top: auto; }
.d1 > svg { margin: 13px 0 0 12px; }
.link { width: 11px; display: flex; flex-direction: column; align-items: center; margin-left: -4px; padding: 6px 0 4px; }
.link i { width: 1px; height: 105px; background: #555; }
.link button { width: 11px; height: 13px; border: 1px solid #333; line-height: 10px; margin: 2px 0; flex: none; }
.link .rest { height: auto; flex: 1; }
.d2 { width: 45px; padding: 3px 0 5px; gap: 3px; }
.d2 .btn { width: 25px; }
.d2 .btn:nth-child(2) { margin-top: 2px; }
.d2 > svg { margin: 8px 0 0 8px; }
.mod { margin: 3px 0; border: solid #5a5a5a; border-width: 0 1px; padding: 1px 4px 0 3px; width: 129px; display: flex; flex-direction: column; }
.mod .pad { margin: 1px 0 1px; }
.mod-labels, .mod-vals { display: flex; justify-content: space-between; }
.mod-labels { padding-right: 21px; margin-bottom: 3px; }
.mod-vals .num { width: 42px; }
.mod-vals .btn { width: 22px; margin-left: 6px; }
.pol { flex: 1; display: flex; flex-direction: column; align-items: center; padding-top: 3px; gap: 3px; }
.pol .btn { width: 23px; }
.pol > span { margin-bottom: 3px; }
.pol .btn + .knob { margin-top: 9px; }
.pol .knob + .knob { margin-top: 3px; }
.reverb .body { padding: 2px 0 3px 6px; }
.r-col { display: flex; flex-direction: column; justify-content: space-between; width: 79px; margin-right: 10px; }
.r-col:nth-child(2) { margin-right: 9px; }
.r-col:nth-child(3) { width: 41px; }
.r-col:nth-child(4) { width: 111px; margin-right: 5px; }
.r-col:nth-child(5) { margin-right: 5px; }
.r-col:nth-child(6) { flex: 1; margin-right: 0; }
.top { display: flex; flex-direction: column; gap: 3px; }
.top b { height: 12px; margin-bottom: -1px; }
.quality { height: 13px; }
.top .size { margin-top: 10px; }
.decay { gap: 13px; }
.focus { width: 53px; flex: none; }
.brackets { position: absolute; left: 11px; top: 11px; }
.freeze { width: 46px; display: flex; flex-direction: column; gap: 4px; flex: none; }
.freeze .row { justify-content: space-between; }
.freeze .row .btn { width: 21px; }
.device-drop { flex: 1; background: #8c8c8c; margin: -1px 5px -1px 0; font-weight: bold; line-height: 14px; padding-top: 74px; text-align: right; min-width: 0; }

.footer { display: flex; align-items: flex-start; padding: 0 7px 8px 8px; gap: 8px; }
.footer .round { margin-top: 10px; }
.info { flex: 1; height: 22px; margin-top: 8px; background: #8c8c8c; border: 4px solid #5a5a5a; border-radius: 4px; }
.overview { width: 208px; height: 22px; margin-top: 8px; background: #5a5a5a; border-radius: 4px; padding: 3px 4px; }
.overview svg { background: #b5b5b5; }
.tab { width: 155px; height: 30px; background: #505050; border-radius: 0 0 5px 5px; display: flex; align-items: flex-end; padding: 0 4px 1px 5px; gap: 4px; font-weight: bold; }
.tab span { line-height: 20px; }
</style>
